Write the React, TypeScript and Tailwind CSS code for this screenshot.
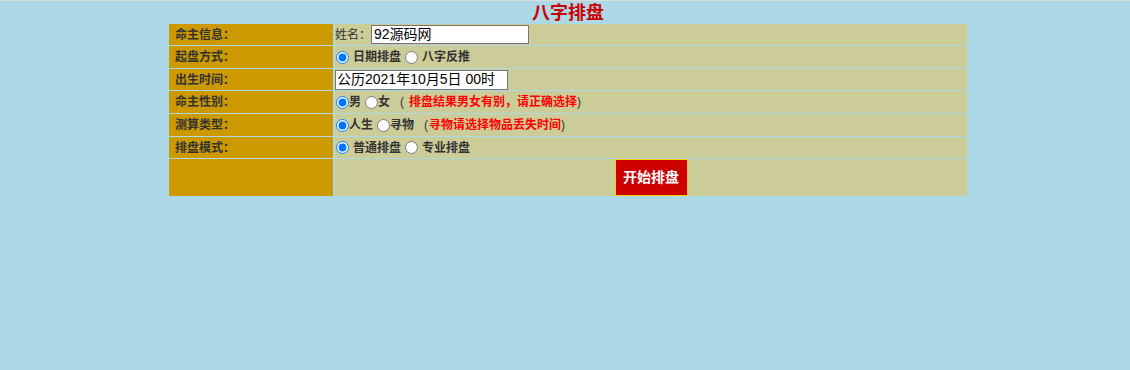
const rows = [
  { label: '命主信息：', h: 'h-[21px]' },
  { label: '起盘方式：', h: 'h-[22px]' },
  { label: '出生时间：', h: 'h-[21px]' },
  { label: '命主性别：', h: 'h-[22px]' },
  { label: '测算类型：', h: 'h-[22px]' },
  { label: '排盘模式：', h: 'h-[21px]' },
];

const font = { fontFamily: '"Liberation Sans", "Noto Sans CJK SC", sans-serif' };

const Radio = ({ name, checked }: { name: string; checked?: boolean }) => (
  <input
    type="radio"
    name={name}
    defaultChecked={checked}
    className="m-0 ml-[1px] mr-[3px] h-[13px] w-[13px] align-middle"
  />
);

const BaziForm = () => {
  const cells = [
    <div className="flex items-center font-normal">
      <span>姓名：</span>
      <input
        defaultValue="92源码网"
        className="h-[19px] w-[158px] border border-[#767676] bg-white px-[2px] text-[14px] font-normal text-black outline-none"
      />
    </div>,
    <div className="flex items-center">
      <Radio name="qp" checked />
      <span className="ml-[1px]">日期排盘</span>
      <span className="ml-[3px] flex items-center">
        <Radio name="qp" />
        <span className="ml-[1px]">八字反推</span>
      </span>
    </div>,
    <div className="flex items-center">
      <input
        defaultValue="公历2021年10月5日 00时"
        className="h-[20px] w-[173px] border border-[#767676] bg-white px-[1px] text-[14px] font-normal text-black outline-none"
      />
    </div>,
    <div className="flex items-center">
      <Radio name="sex" checked />
      <span className="-ml-[3px]">男</span>
      <span className="ml-[3px] flex items-center">
        <Radio name="sex" />
        <span className="-ml-[3px]">女</span>
      </span>
      <span className="ml-[10px] font-normal">(</span>
      <span className="ml-[5px] text-[#ff0000]">排盘结果男女有别，请正确选择</span>
      <span className="font-normal">)</span>
    </div>,
    <div className="flex items-center">
      <Radio name="type" checked />
      <span className="-ml-[3px]">人生</span>
      <span className="ml-[3px] flex items-center">
        <Radio name="type" />
        <span className="-ml-[3px]">寻物</span>
      </span>
      <span className="ml-[10px] font-normal">(</span>
      <span className="ml-[1px] text-[#ff0000]">寻物请选择物品丢失时间</span>
      <span className="font-normal">)</span>
    </div>,
    <div className="flex items-center">
      <Radio name="mode" checked />
      <span className="ml-[1px]">普通排盘</span>
      <span className="ml-[3px] flex items-center">
        <Radio name="mode" />
        <span className="ml-[1px]">专业排盘</span>
      </span>
    </div>,
  ];

  return (
    <div className="min-h-[370px] w-full border-t border-[#dcdcdc] bg-[#add8e6]" style={font}>
      <div className="ml-[169px] w-[798px]">
        <h1 className="flex h-[23px] items-center justify-center text-[18px] font-bold leading-none text-[#cc0000]">
          八字排盘
        </h1>
        <div className="flex flex-col gap-[1px] text-[12px] font-bold text-[#333]">
          {rows.map((row, i) => (
            <div key={i} className={`flex gap-[2px] ${row.h}`}>
              <div className="flex w-[164px] items-center bg-[#cc9900] pl-[6px]">{row.label}</div>
              <div className="flex flex-1 items-center bg-[#cccc99]">{cells[i]}</div>
            </div>
          ))}
          <div className="flex h-[37px] gap-[2px]">
            <div className="w-[164px] bg-[#cc9900]"></div>
            <div className="flex flex-1 justify-center bg-[#cccc99]">
              <button className="h-full w-[73px] border border-[#ffcc00] bg-[#cc0000] text-[14px] font-bold text-white">
                开始排盘
              </button>
            </div>
          </div>
        </div>
      </div>
    </div>
  );
};

export default function App() {
  return <BaziForm />;
}
